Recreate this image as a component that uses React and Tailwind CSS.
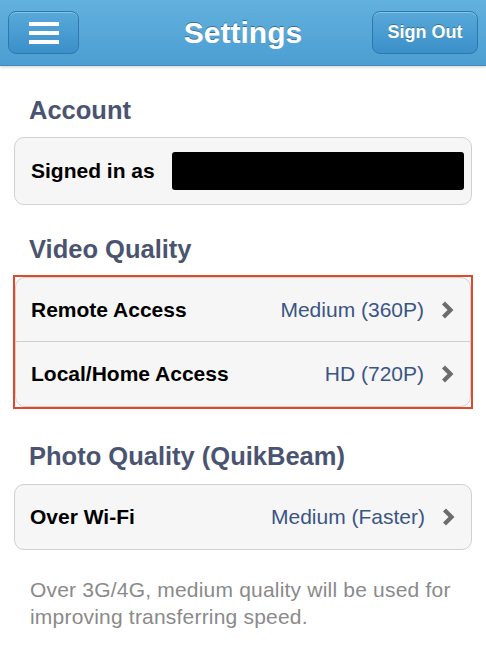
import React from "react";

const Chevron = () => (
  <svg width="13" height="18" viewBox="0 0 13 18" className="shrink-0">
    <polyline points="2.5,2 9.5,9 2.5,16" fill="none" stroke="#6c6c6c" strokeWidth="4.2" strokeLinecap="butt" strokeLinejoin="miter" />
  </svg>
);

const Row = ({ label, value, last }) => (
  <div className={`flex items-center h-[64px] pl-[15px] pr-[16px] ${last ? "" : "border-b border-[#cfcfcf]"}`}>
    <span className="text-[21px] font-bold text-black flex-1">{label}</span>
    <span className="text-[21px] text-[#3b5585] mr-[17px]">{value}</span>
    <Chevron />
  </div>
);

export default function App() {
  return (
    <div className="w-[486px] h-[648px] bg-white overflow-hidden" style={{ fontFamily: '"Liberation Sans", Arial, sans-serif' }}>
      <div className="h-[66px] bg-gradient-to-b from-[#62b1de] to-[#4c9ed2] border-b border-[#3f8cc0] grid grid-cols-[1fr_auto_1fr] items-center px-[8px] shadow-[0_1px_3px_rgba(0,0,0,0.2)]">
        <div className="flex justify-start">
          <div className="w-[71px] h-[43px] rounded-[8px] border border-[#2f78ad] bg-gradient-to-b from-[#58a9da] to-[#3b90c9] shadow-[inset_0_1px_0_rgba(255,255,255,0.3)] flex flex-col items-center justify-center gap-[5px]">
            <div className="w-[30px] h-[4px] bg-white" />
            <div className="w-[30px] h-[4px] bg-white" />
            <div className="w-[30px] h-[4px] bg-white" />
          </div>
        </div>
        <div className="text-[30px] font-bold text-white [text-shadow:0_-1px_0_rgba(0,0,0,0.35)]">Settings</div>
        <div className="flex justify-end">
          <div className="w-[106px] h-[43px] rounded-[8px] border border-[#2f78ad] bg-gradient-to-b from-[#58a9da] to-[#3b90c9] shadow-[inset_0_1px_0_rgba(255,255,255,0.3)] flex items-center justify-center">
            <span className="text-[18px] font-bold text-white [text-shadow:0_-1px_0_rgba(0,0,0,0.3)]">Sign Out</span>
          </div>
        </div>
      </div>

      <div className="flex flex-col">
        <h2 className="mt-[30px] ml-[29px] text-[25.5px] leading-[28px] font-bold text-[#4a5470]">Account</h2>
        <div className="mt-[13px] mx-[14px] h-[68px] rounded-[10px] border-[1.5px] border-[#d0d0d0] bg-[#f6f6f6] flex items-center pl-[16px] pr-[7px]">
          <span className="text-[21px] font-bold text-black">Signed in as</span>
          <div className="ml-auto w-[292px] h-[38px] bg-black rounded-[3px]" />
        </div>

        <h2 className="mt-[30px] ml-[29px] text-[25.5px] leading-[28px] font-bold text-[#4a5470]">Video Quality</h2>
        <div className="mt-[12px] mx-[13px] border-2 border-[#e4482c]">
          <div className="rounded-[10px] border-[1.5px] border-[#d0d0d0] bg-[#f6f6f6]">
            <Row label="Remote Access" value="Medium (360P)" />
            <Row label="Local/Home Access" value="HD (720P)" last />
          </div>
        </div>

        <h2 className="mt-[33px] ml-[29px] text-[25.5px] leading-[28px] font-bold text-[#4a5470]">Photo Quality (QuikBeam)</h2>
        <div className="mt-[14px] mx-[14px] rounded-[10px] border-[1.5px] border-[#d0d0d0] bg-[#f6f6f6]">
          <Row label="Over Wi-Fi" value="Medium (Faster)" last />
        </div>

        <p className="mt-[26px] mx-[30px] text-[21px] leading-[27px] tracking-[0.2px] text-[#8a8a8a]">
          Over 3G/4G, medium quality will be used for improving transferring speed.
        </p>
      </div>
    </div>
  );
}
